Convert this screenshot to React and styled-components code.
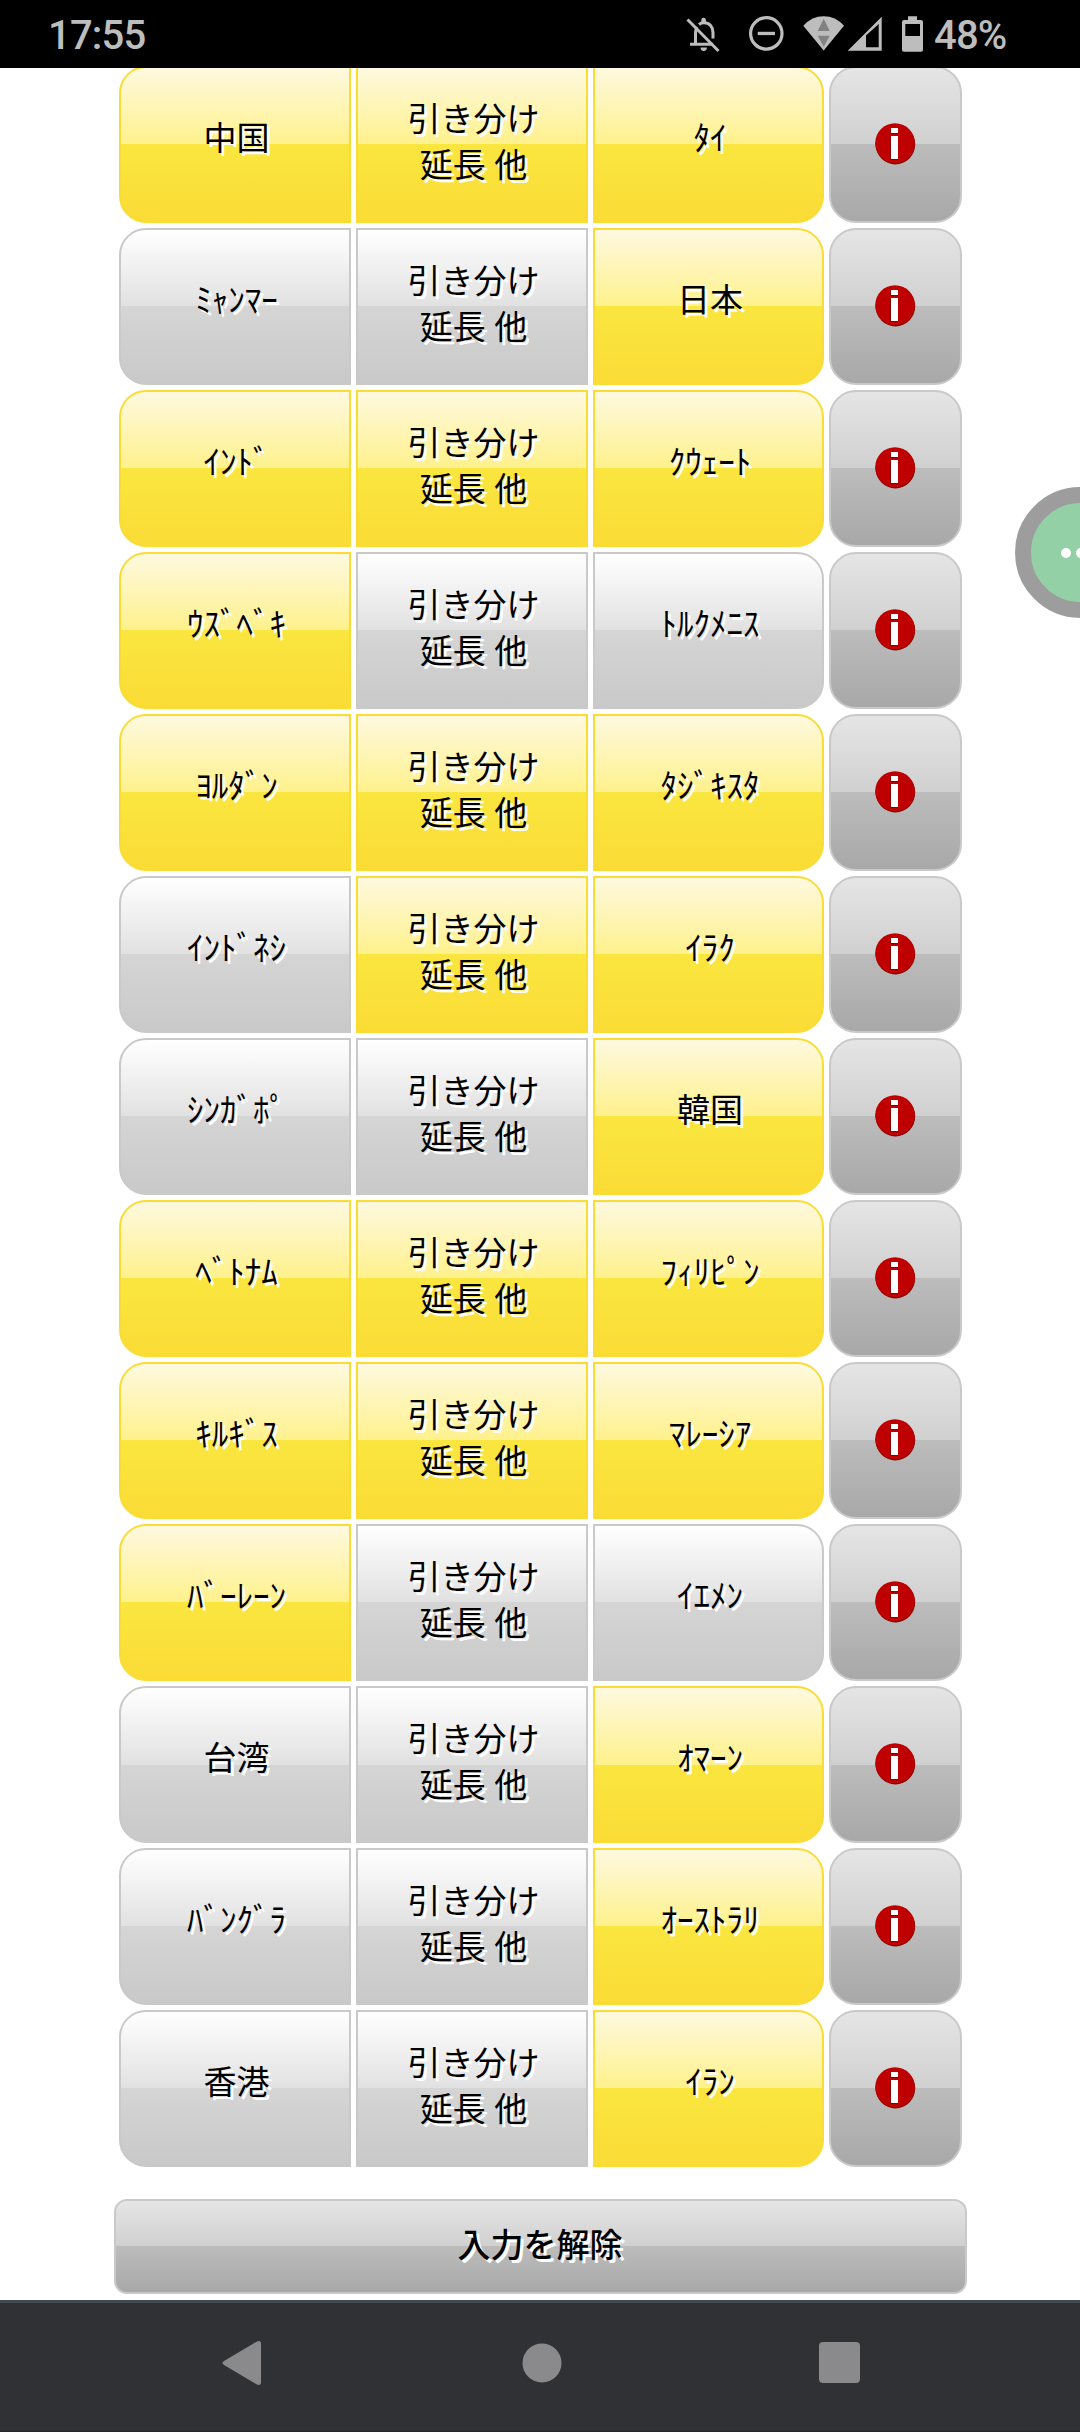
import React from "react";
import styled, { createGlobalStyle, css } from "styled-components";

const GlobalStyle = createGlobalStyle`
  * {
    box-sizing: border-box;
  }

  body {
    margin: 0;
    background: #fff;
  }
`;

const Screen = styled.div`
  position: relative;
  display: flex;
  flex-direction: column;
  width: 1080px;
  height: 2432px;
  overflow: hidden;
  background: #fff;
  font-family: "Noto Sans CJK JP", "Noto Sans", sans-serif;
`;

const StatusBar = styled.header`
  display: flex;
  flex: none;
  align-items: center;
  justify-content: space-between;
  height: 68px;
  padding: 2px 74px 0 48px;
  background: #000;
  color: #bdbdbd;
  font-family: Roboto, sans-serif;
  font-size: 40px;
  font-weight: 500;
`;

const Clock = styled.span`
  letter-spacing: -0.8px;
`;

const StatusIcons = styled.div`
  display: flex;
  align-items: center;
`;

const Percent = styled.span`
  width: 72px;
  letter-spacing: -0.8px;
  white-space: nowrap;
`;

const Page = styled.main`
  display: flex;
  flex: 1;
  flex-direction: column;
  align-items: center;
  min-height: 0;
  overflow: hidden;
`;

const Matches = styled.div`
  display: flex;
  flex: none;
  flex-direction: column;
  gap: 5px;
  width: 843px;
  margin-top: -2px;
`;

const Match = styled.div`
  display: grid;
  grid-template-columns: 232px 232px 231px 133px;
  gap: 5px;
  height: 157px;
`;

const grey = css`
  border-color: #c9c9c9;
  background: linear-gradient(#fff 0%, #e1e1e1 50%, #d5d5d5 50%, #c9c9c9 100%);
`;

const yellow = css`
  border-color: #fadc35;
  background: linear-gradient(#fef9df 0%, #fff18c 50%, #fae640 50%, #fadc35 100%);
`;

const dark = css`
  border-color: #c9c9c9;
  background: linear-gradient(#e5e5e5 0%, #d0d0d0 50%, #bcbcbc 50%, #a8a8a8 100%);
`;

const Button = styled.button`
  display: flex;
  align-items: center;
  justify-content: center;
  margin: 0;
  padding: 0;
  border: 2px solid;
  color: #000;
  font-family: inherit;
  font-size: 33px;
  line-height: 46px;
  text-shadow: 3px 3px 0 #fff;
  white-space: pre-line;
  word-spacing: 1px;
`;

const Choice = styled(Button)`
  ${(props) => (props.$on ? yellow : grey)}
  padding: 0 0 ${(props) => (props.$draw ? "9px" : "17px")} 4px;
  border-radius: ${(props) => props.$radius || "0"};
`;

const InfoButton = styled(Button)`
  ${dark}
  padding-bottom: 1px;
  border-radius: 27px;
`;

const ClearButton = styled(Button)`
  ${dark}
  flex: none;
  width: 853px;
  height: 95px;
  margin-top: 32px;
  padding-bottom: 8px;
  border-radius: 13px;
  font-weight: 500;
`;

const NavBar = styled.nav`
  display: flex;
  flex: none;
  align-items: center;
  justify-content: space-between;
  height: 132px;
  padding: 0 220px 9px 222px;
  border-top: 3px solid #424950;
  border-bottom: 1px solid #29242a;
  background: #303134;
`;

const HomeButton = styled.svg`
  margin-left: 3px;
`;

const Floating = styled.div`
  position: absolute;
  top: 487px;
  left: 1015px;
  display: flex;
  align-items: center;
  justify-content: center;
  gap: 5px;
  width: 131px;
  height: 131px;
  border: 16px solid #9d9d9d;
  border-radius: 50%;
  background: #94d0a5;
`;

const Dot = styled.span`
  width: 10px;
  height: 10px;
  border-radius: 50%;
  background: #fff;
`;

const LEFT = "27px 0 0 27px";
const RIGHT = "0 27px 27px 0";

// home, away, and which of home / draw / away are picked
const matches = [
  ["中国", "タイ", 1, 1, 1],
  ["ミャンマー", "日本", 0, 0, 1],
  ["インド", "クウェート", 1, 1, 1],
  ["ウズベキ", "トルクメニス", 1, 0, 0],
  ["ヨルダン", "タジキスタ", 1, 1, 1],
  ["インドネシ", "イラク", 0, 1, 1],
  ["シンガポ", "韓国", 0, 0, 1],
  ["ベトナム", "フィリピン", 1, 1, 1],
  ["キルギス", "マレーシア", 1, 1, 1],
  ["バーレーン", "イエメン", 1, 0, 0],
  ["台湾", "オマーン", 0, 0, 1],
  ["バングラ", "オーストラリ", 0, 0, 1],
  ["香港", "イラン", 0, 0, 1],
];

const FULL =
  "アイウエオカキクケコサシスセソタチツテトナニヌネノハヒフヘホマミムメモヤユヨラリルレロワンァィゥェォャュョッー";
const HALF =
  "ｱｲｳｴｵｶｷｸｹｺｻｼｽｾｿﾀﾁﾂﾃﾄﾅﾆﾇﾈﾉﾊﾋﾌﾍﾎﾏﾐﾑﾒﾓﾔﾕﾖﾗﾘﾙﾚﾛﾜﾝｧｨｩｪｫｬｭｮｯｰ";

// team names are shown in half-width katakana
const toHalf = (name) =>
  [...name.normalize("NFD")]
    .map((c) => {
      if (c === "\u3099") return "\uff9e";
      if (c === "\u309a") return "\uff9f";
      const i = FULL.indexOf(c);
      return i < 0 ? c : HALF[i];
    })
    .join("");

const InfoIcon = () => (
  <svg width="41" height="42" viewBox="0 0 41 42">
    <ellipse cx="20.4" cy="21.2" rx="19.8" ry="20.2" fill="#7d0000" />
    <ellipse cx="20" cy="20.2" rx="19.8" ry="20" fill="#bf0000" />
    <path d="M15 6h8v5h-8zM15 14h8v23h-8z" fill="#8a0000" />
    <path d="M16 5h7v5h-7zM16 13h7v23h-7z" fill="#fff" />
  </svg>
);

const StatusGlyphs = () => (
  <svg width="250" height="66" viewBox="684 2 250 66" fill="#bdbdbd">
    {/* notifications off */}
    <g fill="none" stroke="#bdbdbd" strokeWidth="3">
      <path d="M687.500 19.500l31 31.500" />
      <path d="M690 44.300h23M695.500 44V34q0-4 1.500-7" />
      <path d="M699 24.500q2-1.700 5-1.700c5.500 0 9 4.200 9 9.700v6" />
    </g>
    <path d="M701.300 23v-3a2.300 2.300 0 0 1 4.600 0v3zM700.500 47.500h6.400a3.200 3.400 0 0 1-6.400 0z" />
    {/* do not disturb */}
    <circle cx="766.300" cy="33.400" r="15.700" fill="none" stroke="#bdbdbd" strokeWidth="3.200" />
    <path d="M757.700 31.800H775v3.300h-17.300z" />
    {/* wifi */}
    <path d="M803.300 25.700Q812 16.300 823.700 16.300T844 25.700L823.700 50.500z" />
    <path d="M823.700 18.700l6 12.300h-12zM817.700 35.700h12l-6 11z" fill="#828282" />
    {/* signal */}
    <path
      fillRule="evenodd"
      d="M847.700 50.700l34-34v34zM866 35.500v11.800h12.700V24z"
    />
    {/* battery */}
    <path
      fillRule="evenodd"
      d="M908 16.300h9V20h4q2 0 2 2v27.700q0 2-2 2h-17q-2 0-2-2V22q0-2 2-2h4zM905.300 24v12H920V24z"
    />
  </svg>
);

const App = () => {
  return (
    <>
      <GlobalStyle />
      <Screen>
        <StatusBar>
          <Clock>17:55</Clock>
          <StatusIcons>
            <StatusGlyphs />
            <Percent>48%</Percent>
          </StatusIcons>
        </StatusBar>
        <Page>
          <Matches>
            {matches.map(([home, away, h, d, a]) => (
              <Match key={home}>
                <Choice $on={h} $radius={LEFT}>
                  {toHalf(home)}
                </Choice>
                <Choice $on={d} $draw>
                  {"引き分け\n延長 他"}
                </Choice>
                <Choice $on={a} $radius={RIGHT}>
                  {toHalf(away)}
                </Choice>
                <InfoButton>
                  <InfoIcon />
                </InfoButton>
              </Match>
            ))}
          </Matches>
          <ClearButton>入力を解除</ClearButton>
        </Page>
        <NavBar>
          <svg width="40" height="46" viewBox="0 0 40 46">
            <path d="M35 1.500Q39 0 39 4v38q0 4-4 2.500L2 25q-3-2 0-4z" fill="#8a8a8c" />
          </svg>
          <HomeButton width="40" height="40" viewBox="0 0 40 40">
            <circle cx="20" cy="20" r="19.500" fill="#8a8a8c" />
          </HomeButton>
          <svg width="41" height="41" viewBox="0 0 41 41">
            <rect width="41" height="41" rx="4" fill="#8a8a8c" />
          </svg>
        </NavBar>
        <Floating>
          <Dot />
          <Dot />
          <Dot />
        </Floating>
      </Screen>
    </>
  );
};

export default App;
